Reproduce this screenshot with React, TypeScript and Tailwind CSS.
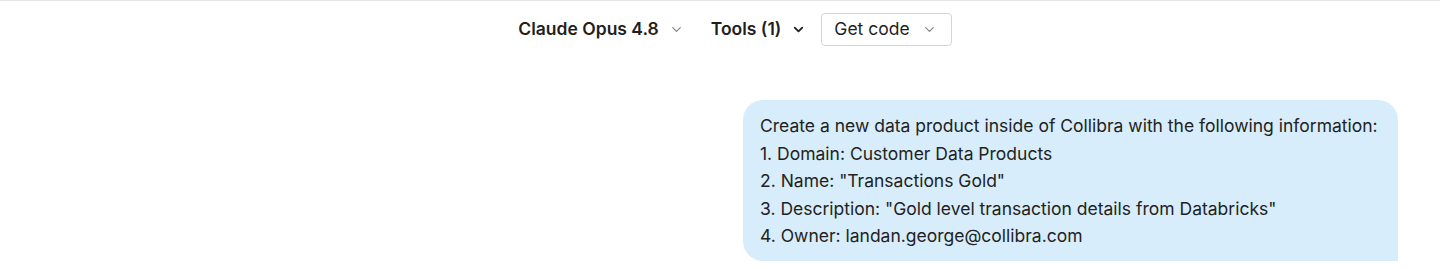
import { ChevronDown } from "lucide-react";

export default function App() {
  const lines = [
    "Create a new data product inside of Collibra with the following information:",
    "1. Domain: Customer Data Products",
    '2. Name: "Transactions Gold"',
    '3. Description: "Gold level transaction details from Databricks"',
    "4. Owner: landan.george@collibra.com",
  ];

  return (
    <div
      className="h-[269px] w-full overflow-hidden bg-white border-t border-[#e5e5e5] text-[#1f1f1f]"
      style={{ fontFamily: "Inter, 'Liberation Sans', sans-serif" }}
    >
      {/* Toolbar */}
      <div className="flex items-center justify-center pl-[22px] pt-[12px]">
        <button className="flex items-center gap-[10px] text-[17.5px] font-semibold px-[8px]">
          Claude Opus 4.8
          <ChevronDown className="w-[15px] h-[15px] text-[#888]" strokeWidth={2} />
        </button>
        <button className="ml-[11px] flex items-center gap-[10px] text-[17.5px] font-semibold px-[8px]">
          Tools (1)
          <ChevronDown className="w-[15px] h-[15px] text-[#222]" strokeWidth={3} />
        </button>
        <button className="ml-[7px] flex items-center gap-[12px] h-[33px] pl-[12px] pr-[14px] border border-[#d4d4d4] rounded-[4px] text-[17.5px]">
          Get code
          <ChevronDown className="w-[15px] h-[15px] text-[#888]" strokeWidth={2} />
        </button>
      </div>

      {/* Message */}
      <div className="flex justify-end pr-[42px] pt-[54px]">
        <div className="w-[655px] bg-[#d8edfb] rounded-[20px] rounded-br-none pl-[17px] pr-[12px] pt-[12px] pb-[11px] text-[17.5px] leading-[27.5px] text-[#222]">
          {lines.map((l) => (
            <div key={l} className="whitespace-nowrap">{l}</div>
          ))}
        </div>
      </div>
    </div>
  );
}
